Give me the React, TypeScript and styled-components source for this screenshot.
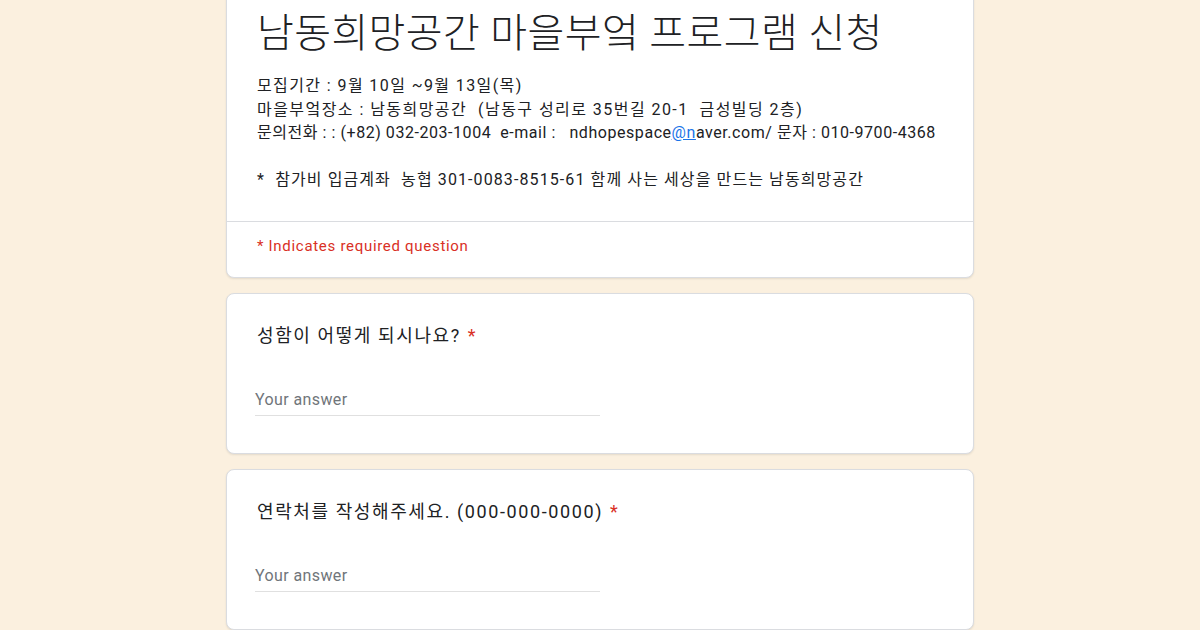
import React from "react";
import styled, { createGlobalStyle } from "styled-components";

const Global = createGlobalStyle`
  html, body {
    margin: 0;
    padding: 0;
    background: #fbf0df;
    font-family: Roboto, "Noto Sans CJK KR", "Noto Sans", sans-serif;
    color: #202124;
    overflow: hidden;
  }
`;

const Page = styled.div`
  width: 1200px;
  height: 630px;
  overflow: hidden;
  background: #fbf0df;
`;

const Column = styled.div`
  width: 748px;
  margin: -10px auto 0;
  display: flex;
  flex-direction: column;
  gap: 15px;
`;

const Card = styled.div`
  background: #ffffff;
  border: 1px solid #dadce0;
  border-radius: 8px;
  box-shadow: 0 1px 2px rgba(60, 64, 67, 0.12);
  overflow: hidden;
`;

const HeaderTop = styled.div`
  padding: 19px 30px 29px;
  border-bottom: 1px solid #dadce0;
`;

const Title = styled.h1`
  margin: 0;
  font-size: 40px;
  font-weight: 300;
  line-height: 48px;
  letter-spacing: 0.4px;
  color: #202124;
`;

const Description = styled.div`
  margin-top: 16px;
  font-size: 16px;
  line-height: 23.5px;
  color: #202124;
  white-space: pre;
`;

const Line = styled.div<{ $spacing?: number }>`
  min-height: 23.5px;
  letter-spacing: ${(p) => p.$spacing ?? 0.55}px;
`;

const Link = styled.span`
  color: #1a73e8;
  text-decoration: underline;
`;

const Required = styled.div`
  padding: 14px 30px 21px;
  font-size: 15px;
  line-height: 20px;
  letter-spacing: 0.7px;
  color: #d93025;
`;

const Question = styled.div`
  padding: 30px 30px 37px;
`;

const QTitle = styled.div`
  font-size: 18px;
  line-height: 24px;
  letter-spacing: 1.6px;
  color: #202124;
`;

const Star = styled.span`
  color: #d93025;
  margin-left: 7px;
`;

const Answer = styled.div`
  margin-top: 37px;
  width: 345px;
  height: 30px;
  border-bottom: 1px solid #e0e0e0;
  display: flex;
  align-items: center;
  font-size: 16px;
  letter-spacing: 0.4px;
  color: #70757a;
  margin-left: -2px;
`;

const questions = [
  "성함이 어떻게 되시나요?",
  "연락처를 작성해주세요. (000-000-0000)",
];

export default function App() {
  return (
    <Page>
      <Global />
      <Column>
        <Card>
          <HeaderTop>
            <Title>남동희망공간 마을부엌 프로그램 신청</Title>
            <Description>
              <Line $spacing={1.4}>모집기간 : 9월 10일 ~9월 13일(목)</Line>
              <Line $spacing={1.45}>마을부엌장소 : 남동희망공간  (남동구 성리로 35번길 20-1  금성빌딩 2층)</Line>
              <Line>
                {"문의전화 : : (+82) 032-203-1004  e-mail :   ndhopespace"}
                <Link>@n</Link>
                {"aver.com/ 문자 : 010-9700-4368"}
              </Line>
              <Line />
              <Line $spacing={1.1}>*  참가비 입금계좌  농협 301-0083-8515-61 함께 사는 세상을 만드는 남동희망공간</Line>
            </Description>
          </HeaderTop>
          <Required>* Indicates required question</Required>
        </Card>
        {questions.map((q) => (
          <Card key={q}>
            <Question>
              <QTitle>
                {q}
                <Star>*</Star>
              </QTitle>
              <Answer>Your answer</Answer>
            </Question>
          </Card>
        ))}
      </Column>
    </Page>
  );
}
